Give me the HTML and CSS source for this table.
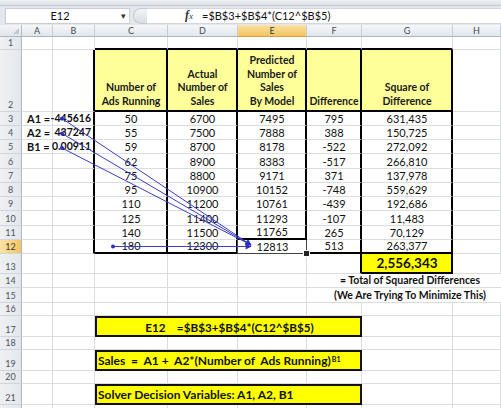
FILE: index.html
```html
<!DOCTYPE html>
<html>
<head>
<meta charset="utf-8">
<link rel="stylesheet" href="styles.css">
</head>
<body>
<div class="app">
  <div class="ribbon"></div>
  <div class="fbar">
    <div class="namebox"><span class="nb-text">E12</span><span class="nb-dd">&#9662;</span></div>
    <div class="fb-cap"></div>
    <div class="fb-field">
      <span class="fx"><i>f</i><span class="fx-x">x</span></span>
      <span class="ftext">=$B$3+$B$4*(C12^$B$5)</span>
    </div>
  </div>
  <div class="sheet">
    <!-- column headers -->
    <div class="corner"></div>
    <div class="ch">A</div><div class="ch">B</div><div class="ch">C</div><div class="ch">D</div>
    <div class="ch sel">E</div><div class="ch">F</div><div class="ch">G</div><div class="ch">H</div>

    <!-- row 1 -->
    <div class="rh">1</div>
    <div class="c"></div><div class="c"></div>
    <div class="c bk"></div><div class="c bk"></div><div class="c bk"></div><div class="c bk"></div><div class="c bk"></div>
    <div class="c"></div>

    <!-- row 2 -->
    <div class="rh">2</div>
    <div class="c"></div><div class="c rk"></div>
    <div class="c y rk bk"><span>Number of</span><span>Ads Running</span></div>
    <div class="c y rk bk"><span>Actual</span><span>Number of</span><span>Sales</span></div>
    <div class="c y rk bk"><span>Predicted</span><span>Number of</span><span>Sales</span><span>By Model</span></div>
    <div class="c y rk bk"><span>Difference</span></div>
    <div class="c y rk bk"><span>Square of</span><span>Difference</span></div>
    <div class="c"></div>

    <!-- row 3 -->
    <div class="rh">3</div>
    <div class="c lbl">A1 =</div><div class="c val rk">-445616</div>
    <div class="c n rk">50</div><div class="c n rk">6700</div><div class="c n rk">7495</div><div class="c n rk">795</div><div class="c n rk">631,435</div>
    <div class="c"></div>

    <!-- row 4 -->
    <div class="rh">4</div>
    <div class="c lbl">A2 =</div><div class="c val rk">437247</div>
    <div class="c n rk">55</div><div class="c n rk">7500</div><div class="c n rk">7888</div><div class="c n rk">388</div><div class="c n rk">150,725</div>
    <div class="c"></div>

    <!-- row 5 -->
    <div class="rh">5</div>
    <div class="c lbl">B1 =</div><div class="c val rk">0.00911</div>
    <div class="c n rk">59</div><div class="c n rk">8700</div><div class="c n rk">8178</div><div class="c n rk">-522</div><div class="c n rk">272,092</div>
    <div class="c"></div>

    <!-- row 6 -->
    <div class="rh">6</div>
    <div class="c"></div><div class="c rk"></div>
    <div class="c n rk">62</div><div class="c n rk">8900</div><div class="c n rk">8383</div><div class="c n rk">-517</div><div class="c n rk">266,810</div>
    <div class="c"></div>

    <!-- row 7 -->
    <div class="rh">7</div>
    <div class="c"></div><div class="c rk"></div>
    <div class="c n rk">75</div><div class="c n rk">8800</div><div class="c n rk">9171</div><div class="c n rk">371</div><div class="c n rk">137,978</div>
    <div class="c"></div>

    <!-- row 8 -->
    <div class="rh">8</div>
    <div class="c"></div><div class="c rk"></div>
    <div class="c n rk">95</div><div class="c n rk">10900</div><div class="c n rk">10152</div><div class="c n rk">-748</div><div class="c n rk">559,629</div>
    <div class="c"></div>

    <!-- row 9 -->
    <div class="rh">9</div>
    <div class="c"></div><div class="c rk"></div>
    <div class="c n rk">110</div><div class="c n rk">11200</div><div class="c n rk">10761</div><div class="c n rk">-439</div><div class="c n rk">192,686</div>
    <div class="c"></div>

    <!-- row 10 -->
    <div class="rh">10</div>
    <div class="c"></div><div class="c rk"></div>
    <div class="c n rk">125</div><div class="c n rk">11400</div><div class="c n rk">11293</div><div class="c n rk">-107</div><div class="c n rk">11,483</div>
    <div class="c"></div>

    <!-- row 11 -->
    <div class="rh">11</div>
    <div class="c"></div><div class="c rk"></div>
    <div class="c n rk">140</div><div class="c n rk">11500</div><div class="c n rk bk">11765</div><div class="c n rk">265</div><div class="c n rk">70,129</div>
    <div class="c"></div>

    <!-- row 12 -->
    <div class="rh sel">12</div>
    <div class="c"></div><div class="c rk"></div>
    <div class="c n rk bk">180</div><div class="c n rk bk">12300</div><div class="c n active">12813</div><div class="c n rk bk">513</div><div class="c n rk bk">263,377</div>
    <div class="c"></div>

    <!-- row 13 -->
    <div class="rh">13</div>
    <div class="c"></div><div class="c"></div><div class="c"></div><div class="c"></div><div class="c"></div>
    <div class="c rk"></div><div class="c total rk bk">2,556,343</div>
    <div class="c"></div>

    <!-- row 14 -->
    <div class="rh">14</div>
    <div class="c"></div><div class="c"></div><div class="c"></div><div class="c"></div><div class="c"></div>
    <div class="c note span3">= Total of Squared Differences</div>

    <!-- row 15 -->
    <div class="rh">15</div>
    <div class="c"></div><div class="c"></div><div class="c"></div><div class="c"></div><div class="c"></div>
    <div class="c note span3">(We Are Trying To Minimize This)</div>

    <!-- row 16 -->
    <div class="rh">16</div>
    <div class="c"></div><div class="c"></div><div class="c"></div><div class="c"></div><div class="c"></div><div class="c"></div><div class="c"></div><div class="c"></div>

    <!-- row 17 -->
    <div class="rh">17</div>
    <div class="c"></div><div class="c"></div>
    <div class="box center">E12&nbsp;&nbsp;&nbsp; =$B$3+$B$4*(C12^$B$5)</div>
    <div class="c"></div><div class="c"></div>

    <!-- row 18 -->
    <div class="rh">18</div>
    <div class="c"></div><div class="c"></div><div class="c"></div><div class="c"></div><div class="c"></div><div class="c"></div><div class="c"></div><div class="c"></div>

    <!-- row 19 -->
    <div class="rh">19</div>
    <div class="c"></div><div class="c"></div>
    <div class="box">Sales&nbsp; =&nbsp; A1 +&nbsp; A2*(Number of&nbsp; Ads Running)<sup>B1</sup></div>
    <div class="c"></div><div class="c"></div>

    <!-- row 20 -->
    <div class="rh">20</div>
    <div class="c"></div><div class="c"></div><div class="c"></div><div class="c"></div><div class="c"></div><div class="c"></div><div class="c"></div><div class="c"></div>

    <!-- row 21 -->
    <div class="rh">21</div>
    <div class="c"></div><div class="c"></div>
    <div class="box">Solver Decision Variables: A1, A2, B1</div>
    <div class="c"></div><div class="c"></div>

    <!-- row 22 (only its top edge is visible) -->
    <div class="rh"></div>
    <div class="c"></div><div class="c"></div><div class="c"></div><div class="c"></div><div class="c"></div><div class="c"></div><div class="c"></div><div class="c"></div>
  </div>

  <svg class="arrows" width="501" height="408" viewBox="0 0 501 408">
    <defs>
      <marker id="ah" viewBox="0 0 10 10" refX="9" refY="5" markerWidth="7" markerHeight="6" orient="auto" markerUnits="userSpaceOnUse">
        <path d="M0 0 L10 5 L0 10 z" fill="#2b2fc4"/>
      </marker>
    </defs>
    <g stroke="#3a3ec8" stroke-width="1" fill="none">
      <line x1="62" y1="118.5" x2="251" y2="245" marker-end="url(#ah)"/>
      <line x1="62" y1="133.5" x2="251" y2="245" marker-end="url(#ah)"/>
      <line x1="62" y1="148" x2="251" y2="245" marker-end="url(#ah)"/>
      <line x1="113" y1="246.5" x2="251" y2="246.5" marker-end="url(#ah)"/>
    </g>
    <g fill="#2b2fc4">
      <circle cx="62" cy="118.5" r="2"/>
      <circle cx="62" cy="133.5" r="2"/>
      <circle cx="62" cy="148" r="2"/>
      <circle cx="113" cy="246.5" r="2"/>
    </g>
  </svg>
</div>
</body>
</html>
```

FILE: styles.css
```css
* { box-sizing: border-box; }
html, body { margin: 0; padding: 0; background: #fff; }

.app {
  position: relative;
  width: 501px;
  height: 408px;
  overflow: hidden;
  font-family: Lato, "Liberation Sans", sans-serif;
  color: #111;
}

.ribbon {
  height: 6px;
  background: linear-gradient(#eef1f5, #dde2e8);
  border-bottom: 1px solid #c3cad3;
}

.fbar {
  height: 19px;
  display: flex;
  align-items: center;
  background: #e4e8ee;
  padding: 1px 0 1px 5px;
}

.namebox {
  width: 125px;
  height: 16px;
  background: #fff;
  border: 1px solid #c9ced6;
  display: flex;
  align-items: center;
  font-size: 11px;
}
.nb-text { flex: 1; text-align: center; padding-right: 3px; }
.nb-dd { width: 12px; font-size: 9px; color: #333; text-align: center; }

.fb-cap {
  width: 14px;
  height: 16px;
  margin-left: 3px;
  border-radius: 8px 0 0 8px;
  background: linear-gradient(#f4f6f8, #d7dce2);
  border: 1px solid #c2c8d0;
  border-right: none;
}

.fb-field {
  flex: 1;
  height: 16px;
  background: #fff;
  border-top: 1px solid #d2d7de;
  border-bottom: 1px solid #d2d7de;
  display: flex;
  align-items: center;
  font-size: 11px;
}
.fx {
  margin-left: 38px;
  width: 17px;
  font-family: "Liberation Serif", serif;
  font-size: 12px;
  color: #333;
}
.fx i { font-weight: bold; }
.fx-x { font-size: 9px; font-style: italic; }
.ftext { margin-left: 0; color: #111; }

.sheet {
  display: grid;
  grid-template-columns: 22px 31px 42px 73px 70px 69px 55px 91px 48px;
  grid-template-rows: 12px 13px 62px 14px 14px 14px 15px 14px 14px 14px 15px 14px 14px 20px 14px 15px 13px 21px 13px 21px 13px 21px 14px;
  font-size: 10.5px;
}

.corner {
  background: linear-gradient(#f3f5f7, #e1e5ea);
  border-right: 1px solid #b1bccb;
  border-bottom: 1px solid #a9b7c6;
  position: relative;
}
.corner::after {
  content: "";
  position: absolute;
  right: 2px;
  bottom: 2px;
  border-left: 6px solid transparent;
  border-bottom: 6px solid #c3c8cf;
}

.ch {
  background: linear-gradient(#f6f7f9, #e2e6eb);
  border-right: 1px solid #c6cdd6;
  border-bottom: 1px solid #a9b7c6;
  font-size: 9px;
  color: #454b52;
  display: flex;
  align-items: center;
  justify-content: center;
}
.ch.sel {
  background: linear-gradient(#fbe3a4, #f3c45f);
  color: #3a3a3a;
  border-bottom-color: #d6a443;
}

.rh {
  background: linear-gradient(90deg, #eef0f3, #e3e7ec);
  border-right: 1px solid #a9b7c6;
  border-bottom: 1px solid #cfd5dd;
  font-size: 9px;
  color: #4e545c;
  display: flex;
  align-items: flex-end;
  justify-content: center;
  padding-bottom: 1px;
}
.rh.sel {
  background: linear-gradient(90deg, #fbe3a4, #f3c45f);
  color: #3a3a3a;
}

.c {
  border-right: 1px solid #dadcdf;
  border-bottom: 1px solid #dadcdf;
  display: flex;
  align-items: flex-end;
  padding: 0 2px 0 3px;
  white-space: nowrap;
  line-height: 13px;
  position: relative;
}
.rk { border-right: 2px solid #000; }
.bk { border-bottom: 2px solid #000; }

.y {
  background: #ffff99;
  flex-direction: column;
  justify-content: flex-end;
  align-items: center;
  font-weight: bold;
  line-height: 13.8px;
  padding-bottom: 1px;
  color: #1a1a1a;
}

.n { justify-content: center; font-size: 11px; }
.lbl { font-weight: bold; padding-left: 5px; font-size: 11px; }
.val { font-weight: bold; justify-content: flex-end; padding-right: 2px; }

.active {
  border-right: 1px solid #444;
  border-bottom: 1px solid #444;
  border-left: 1px solid #444;
  margin-left: -1px;
}
.active::after {
  content: "";
  position: absolute;
  right: -4px;
  bottom: -4px;
  width: 5px;
  height: 5px;
  background: #222;
  border: 1px solid #fff;
  z-index: 2;
}

.total {
  background: #ffff00;
  border-left: 0;
  justify-content: center;
  align-items: center;
  font-weight: bold;
  font-size: 13.5px;
}

.span3 { grid-column: span 3; }
.note {
  font-weight: bold;
  justify-content: center;
  padding-left: 14px;
  border-right: none;
}

.box {
  grid-column: span 4;
  background: #ffff00;
  border: 2px solid #111;
  display: flex;
  align-items: center;
  font-weight: bold;
  font-size: 12px;
  padding: 0 0 0 1px;
  white-space: nowrap;
}
.box.center { justify-content: center; padding-left: 2px; font-size: 11.7px; }
.box sup { font-size: 7px; position: relative; top: -2px; margin-left: 1px; }

.arrows {
  position: absolute;
  left: 0;
  top: 0;
  pointer-events: none;
}
```
